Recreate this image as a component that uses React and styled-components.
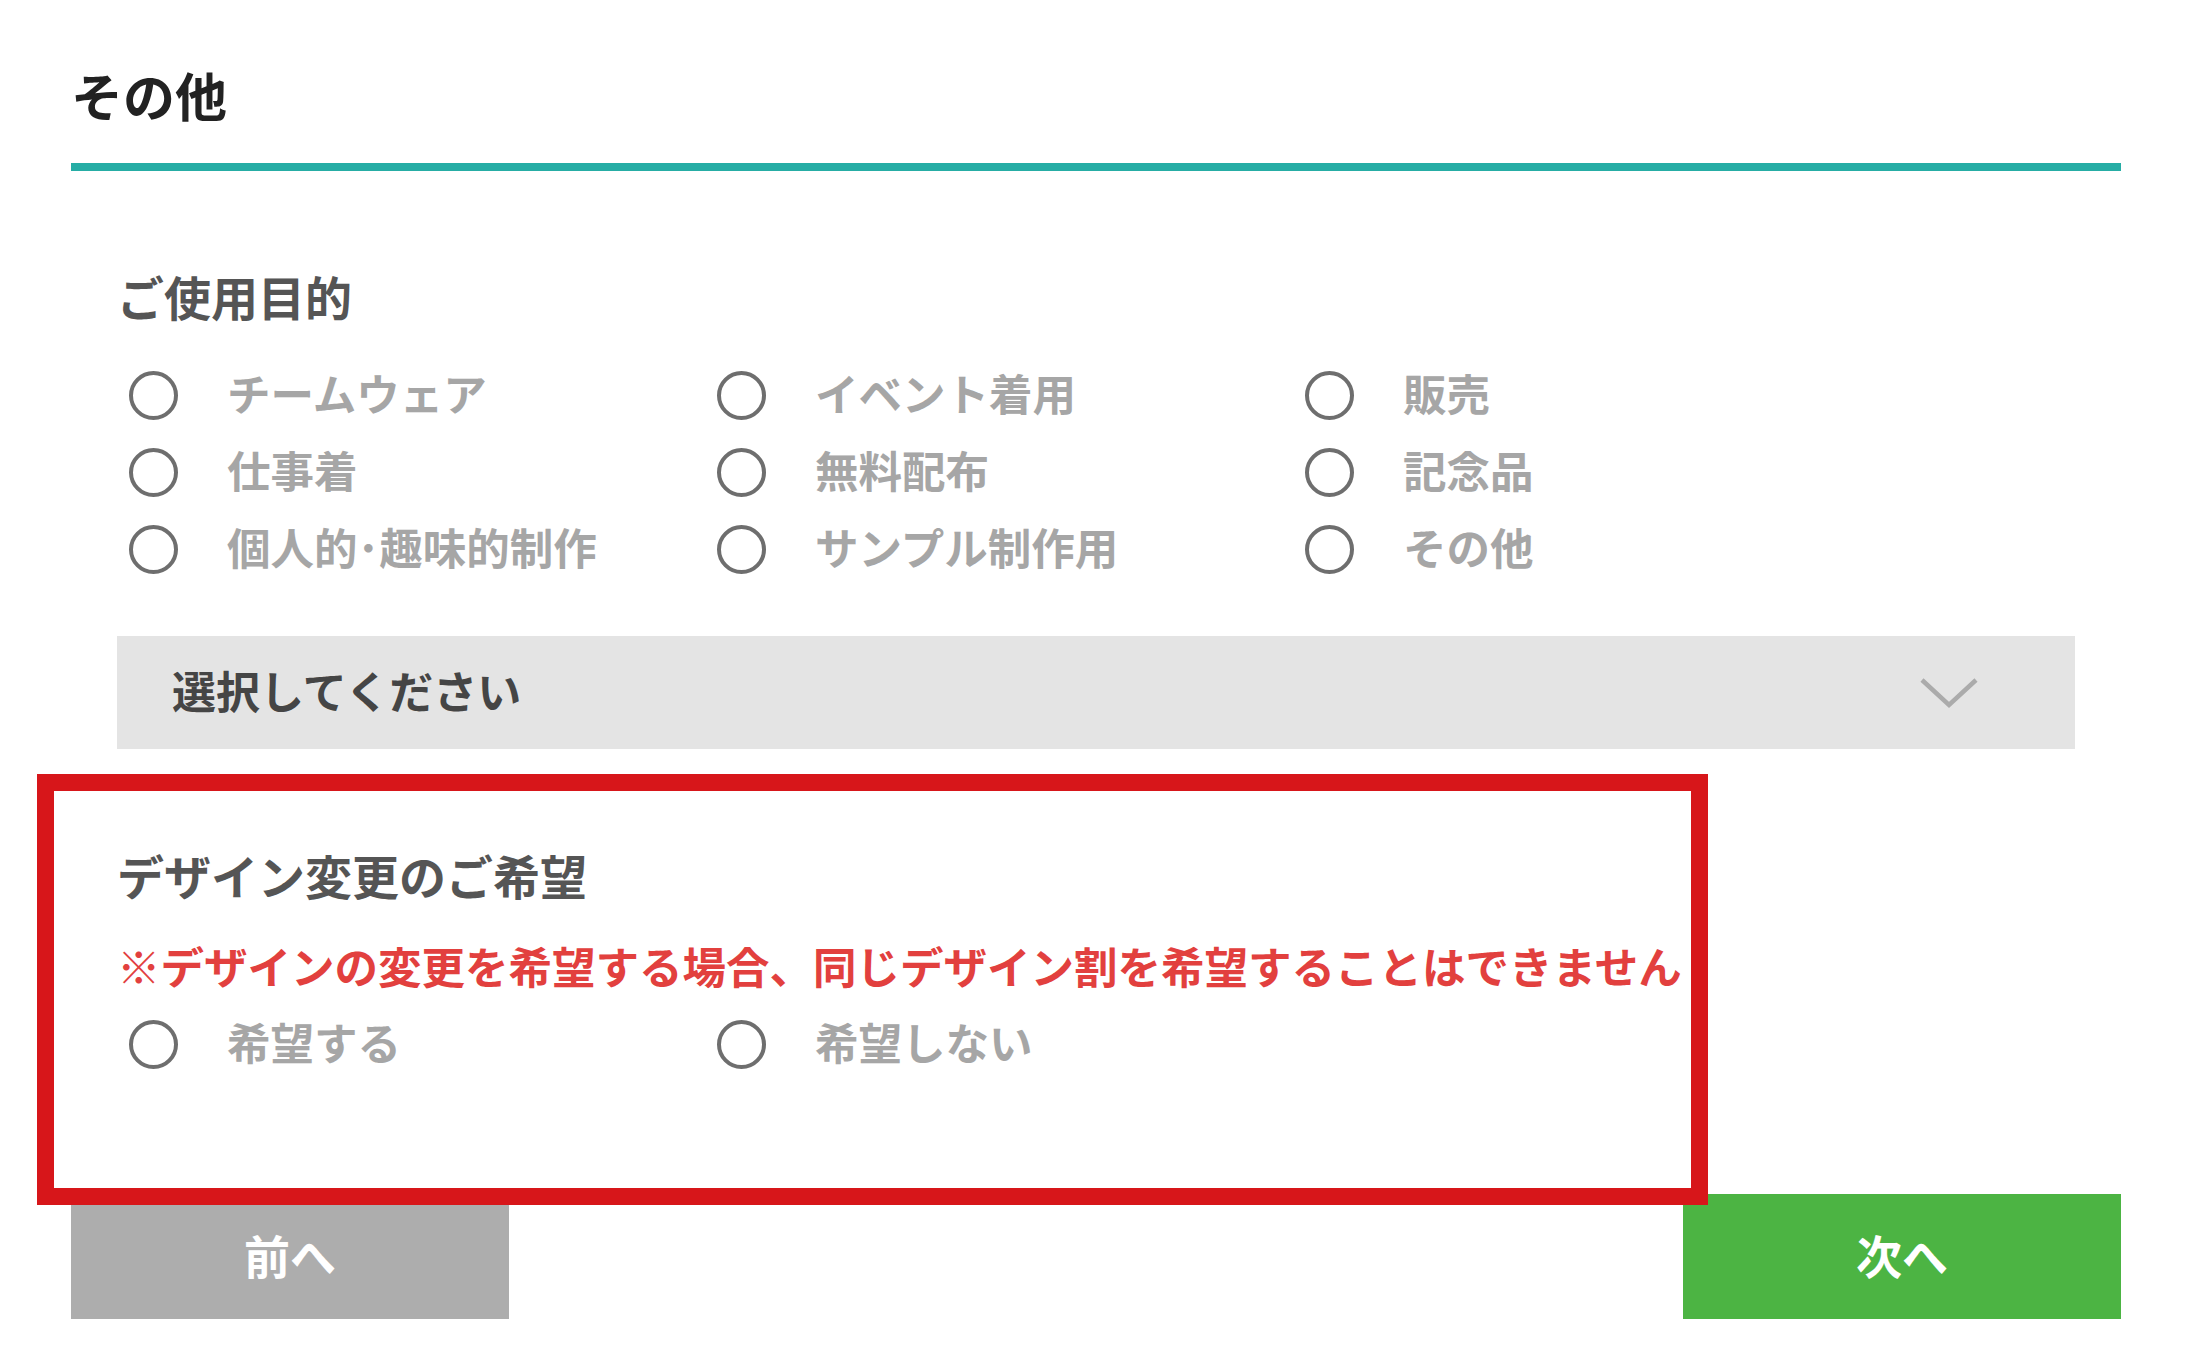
import React from 'react';
import styled, { createGlobalStyle } from 'styled-components';

const GlobalStyle = createGlobalStyle`
    html, body {
        margin: 0;
        padding: 0;
        background: #ffffff;
    }
    body {
        font-family: "Noto Sans CJK JP", "Noto Sans", sans-serif;
    }
`

const Page = styled.div`
    width: 2196px;
    box-sizing: border-box;
    padding: 65px 75px 0 71px;
`
const Title = styled.h2`
    margin: 0;
    padding-bottom: 38px;
    border-bottom: 8px solid #26ada5;
    font-size: 52px;
    line-height: 60px;
    font-weight: 700;
    color: #222222;
`
const Section = styled.div`
    padding: 97px 46px 0 46px;
`
const Heading = styled.h3`
    margin: 0;
    font-size: 47px;
    line-height: 56px;
    font-weight: 700;
    color: #555555;
`
const RadioGrid = styled.div`
    display: grid;
    grid-template-columns: repeat(3, 588px);
    padding-left: 12px;
    margin-top: ${p => p.$top || 0}px;
`
const RadioItem = styled.label`
    display: flex;
    align-items: center;
    gap: 49px;
    height: 77px;
`
const Circle = styled.span`
    width: 49px;
    height: 49px;
    box-sizing: border-box;
    border: 4px solid #6e6e6e;
    border-radius: 50%;
    flex-shrink: 0;
`
const RadioLabel = styled.span`
    font-size: 43.5px;
    line-height: 52px;
    padding-bottom: 5px;
    font-weight: 700;
    color: #a6a6a6;
    white-space: nowrap;
`
const Select = styled.div`
    margin-top: 48px;
    height: 113px;
    background: #e4e4e4;
    display: flex;
    align-items: center;
    justify-content: space-between;
    padding: 0 97px 0 55px;
    font-size: 44px;
    font-weight: 700;
    color: #454545;
`
const SelectText = styled.span`
    padding-bottom: 5px;
`
const Highlight = styled.div`
    position: relative;
    z-index: 1;
    margin: 25px 0 0 -34px;
    width: 1671px;
    box-sizing: border-box;
    border: 17px solid #d7161a;
    background: #ffffff;
    padding: 56px 0 105px 63px;
`
const Note = styled.p`
    margin: 37px 0 14px 0;
    font-size: 43.5px;
    line-height: 52px;
    font-weight: 700;
    color: #e2403e;
    white-space: nowrap;
`
const ButtonRow = styled.div`
    display: flex;
    justify-content: space-between;
    margin-top: -11px;
`
const NavButton = styled.button`
    width: 438px;
    height: 125px;
    border: none;
    padding: 0 0 6px 0;
    background: ${p => p.$bg};
    color: #ffffff;
    font-family: inherit;
    font-size: 46px;
    font-weight: 700;
    cursor: pointer;
`

const purposes = [
    'チームウェア', 'イベント着用', '販売',
    '仕事着', '無料配布', '記念品',
    '個人的･趣味的制作', 'サンプル制作用', 'その他',
];

const Radio = ({ label }) => (
    <RadioItem>
        <Circle />
        <RadioLabel>{label}</RadioLabel>
    </RadioItem>
)

const App = () => {
    return (
        <Page>
            <GlobalStyle />
            <Title>その他</Title>
            <Section>
                <Heading>ご使用目的</Heading>
                <RadioGrid $top={33}>
                    {purposes.map(p => <Radio key={p} label={p} />)}
                </RadioGrid>
                <Select>
                    <SelectText>選択してください</SelectText>
                    <svg width="58" height="32" viewBox="0 0 58 32">
                        <polyline points="2,3 29,28 56,3" fill="none" stroke="#ababab" strokeWidth="4.5" />
                    </svg>
                </Select>
            </Section>
            <Highlight>
                <Heading>デザイン変更のご希望</Heading>
                <Note>※デザインの変更を希望する場合、同じデザイン割を希望することはできません</Note>
                <RadioGrid>
                    <Radio label="希望する" />
                    <Radio label="希望しない" />
                </RadioGrid>
            </Highlight>
            <ButtonRow>
                <NavButton $bg="#adadad">前へ</NavButton>
                <NavButton $bg="#4cb443">次へ</NavButton>
            </ButtonRow>
        </Page>
    )
}

export default App
